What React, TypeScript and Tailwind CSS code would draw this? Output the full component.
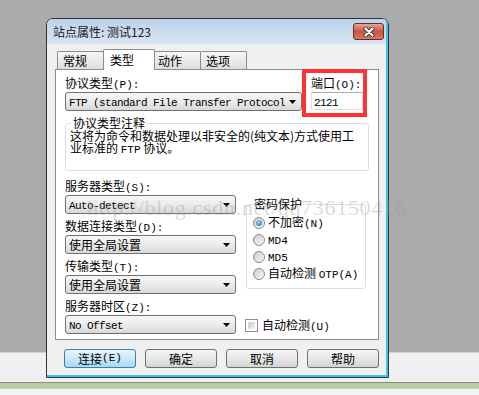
import React from "react";

function M({ children }: { children: React.ReactNode }) {
  return <span className="font-['Liberation_Mono',monospace] text-[11px]">{children}</span>;
}

function Arrow() {
  return (
    <svg width="7" height="4" viewBox="0 0 7 4" className="shrink-0">
      <polygon points="0,0 7,0 3.5,4" fill="#000" />
    </svg>
  );
}

function Select({ className, children }: { className: string; children: React.ReactNode }) {
  return (
    <div
      className={
        "h-[19px] flex items-center rounded-[3px] border border-[#707070] bg-gradient-to-b from-[#f6f6f6] via-[#ececec] to-[#d9d9d9] pl-[3px] pr-[5px] overflow-hidden " +
        className
      }
    >
      <span className="flex-1 overflow-hidden whitespace-nowrap leading-[17px]">{children}</span>
      <Arrow />
    </div>
  );
}

function MonoVal({ children }: { children: React.ReactNode }) {
  return <span className="font-['Liberation_Mono',monospace] text-[11px] tracking-[-0.6px]">{children}</span>;
}

function Label({ children }: { children: React.ReactNode }) {
  return <div className="h-[14px] leading-[14px] whitespace-nowrap">{children}</div>;
}

function Radio({ checked, children }: { checked?: boolean; children: React.ReactNode }) {
  return (
    <div className="h-[17px] flex items-center gap-[3px] whitespace-nowrap">
      <span className="w-[12px] h-[12px] shrink-0 rounded-full border border-[#8b8b8b] bg-gradient-to-br from-[#cdcdcd] to-[#f8f8f8] flex items-center justify-center">
        {checked && (
          <span className="w-[6px] h-[6px] rounded-full bg-[radial-gradient(circle_at_40%_35%,#9ad6ff,#1a5f9e)]" />
        )}
      </span>
      <span className="leading-[12px]">{children}</span>
    </div>
  );
}

function Button({ primary, children }: { primary?: boolean; children: React.ReactNode }) {
  return (
    <div
      className={
        primary
          ? "w-[72px] h-[19px] rounded-[3px] border border-[#3c7fb1] bg-gradient-to-b from-[#eaf6fd] via-[#c9e8f8] to-[#a7d9f5] flex items-center justify-center leading-[17px]"
          : "w-[72px] h-[19px] rounded-[3px] border border-[#707070] bg-gradient-to-b from-[#f4f4f4] via-[#e8e8e8] to-[#d3d3d3] flex items-center justify-center leading-[17px]"
      }
    >
      {children}
    </div>
  );
}

export default function App() {
  return (
    <div className="relative w-[479px] h-[395px] overflow-hidden flex flex-col font-['Noto_Sans_CJK_SC',sans-serif] text-[12px] text-black">
      <div className="h-[352px] bg-[#ababab]" />
      <div className="h-[30px] bg-[#f0f0f0] border-t border-[#d4d4d4]" />
      <div className="h-[1px] bg-[#8c8c8c]" />
      <div className="h-[5px] bg-[#b9cc9d]" />
      <div className="flex-1 bg-[#f3f3f3] border-t border-[#d0d0d0]" />

      {/* dialog window */}
      <div className="absolute left-[46px] top-[18px] w-[343px] h-[360px] border border-[#30343a] rounded-t-[7px] overflow-hidden bg-[#f0f0f0]">
        <div className="h-full flex flex-col border-r-2 border-b-2 border-[#3cc3ee]">
          {/* title bar */}
          <div className="h-[25px] shrink-0 flex items-center pl-[6px] pr-[2px] bg-gradient-to-b from-[#bcd1ea] to-[#d8e5f3]">
            <span className="leading-[14px] text-[#1a1a1a]">站点属性: 测试123</span>
            <div className="ml-auto w-[31px] h-[17px] rounded-[3px] border border-[#6b2a1f] bg-gradient-to-b from-[#e3a699] via-[#c9533f] to-[#d67a67] flex items-center justify-center">
              <svg width="12" height="10" viewBox="0 0 12 10">
                <path d="M2.5 1.5 L9.5 8.5 M9.5 1.5 L2.5 8.5" stroke="#3a3a3a" strokeWidth="4" strokeLinecap="round" />
                <path d="M2.5 1.5 L9.5 8.5 M9.5 1.5 L2.5 8.5" stroke="#ffffff" strokeWidth="2.2" strokeLinecap="round" />
              </svg>
            </div>
          </div>

          {/* client */}
          <div className="flex-1 flex flex-col pl-[8px] pr-[7px] pt-[5px]">
            {/* tabs */}
            <div className="h-[20px] flex items-end pl-[2px] relative z-10">
              <div className="w-[47px] h-[18px] border border-b-0 border-[#898c95] rounded-t-[2px] bg-gradient-to-b from-[#f6f6f6] to-[#dedede] pl-[5px] leading-[17px]">
                常规
              </div>
              <div className="w-[52px] h-[21px] -mb-px -ml-px border border-b-0 border-[#898c95] rounded-t-[2px] bg-white pl-[6px] leading-[19px]">
                类型
              </div>
              <div className="w-[47px] h-[18px] -ml-px border border-b-0 border-[#898c95] rounded-t-[2px] bg-gradient-to-b from-[#f6f6f6] to-[#dedede] pl-[3px] leading-[17px]">
                动作
              </div>
              <div className="w-[47px] h-[18px] -ml-px border border-b-0 border-[#898c95] rounded-t-[2px] bg-gradient-to-b from-[#f6f6f6] to-[#dedede] pl-[5px] leading-[17px]">
                选项
              </div>
            </div>

            {/* panel */}
            <div className="relative h-[271px] shrink-0 border border-[#898c95] bg-white pt-[6px] pl-[9px] pr-[9px]">
              {/* row 1 */}
              <div className="flex">
                <div className="w-[237px]">
                  <Label>
                    协议类型<M>(P):</M>
                  </Label>
                  <Select className="mt-[2px] w-[237px]">
                    <MonoVal>FTP (standard File Transfer Protocol</MonoVal>
                  </Select>
                </div>
                <div className="ml-[9px] w-[52px]">
                  <Label>
                    端口<M>(O):</M>
                  </Label>
                  <div className="mt-[2px] h-[18px] border border-[#dbdfe6] border-t-[#abadb3] bg-white pl-[2px] leading-[16px]">
                    <MonoVal>2121</MonoVal>
                  </div>
                </div>
              </div>

              {/* note group */}
              <fieldset className="mt-[6px] w-[304px] border border-[#d5dfe5] rounded-[3px] pl-[4px] pt-[1px] pb-[14px]">
                <legend className="ml-[1px] px-[2px] leading-[12px]">协议类型注释</legend>
                <div className="leading-[12px]">
                  这将为命令和数据处理以非安全的(纯文本)方式使用工
                </div>
                <div className="leading-[12px]">
                  业标准的 <M>FTP</M> 协议。
                </div>
              </fieldset>

              {/* lower */}
              <div className="mt-[8px] flex">
                <div className="w-[171px] flex flex-col">
                  <Label>
                    服务器类型<M>(S):</M>
                  </Label>
                  <Select className="mt-[2px] w-[171px]">
                    <MonoVal>Auto-detect</MonoVal>
                  </Select>
                  <div className="mt-[5px]">
                    <Label>
                      数据连接类型<M>(D):</M>
                    </Label>
                  </div>
                  <Select className="mt-[2px] w-[171px]">使用全局设置</Select>
                  <div className="mt-[5px]">
                    <Label>
                      传输类型<M>(T):</M>
                    </Label>
                  </div>
                  <Select className="mt-[2px] w-[171px]">使用全局设置</Select>
                  <div className="mt-[5px]">
                    <Label>
                      服务器时区<M>(Z):</M>
                    </Label>
                  </div>
                  <Select className="mt-[2px] w-[171px]">
                    <MonoVal>No Offset</MonoVal>
                  </Select>
                </div>

                <div className="ml-[10px] w-[120px] flex flex-col">
                  <fieldset className="mt-[19px] w-[120px] border border-[#d5dfe5] rounded-[3px] pl-[6px] pt-[4px] pb-[6px]">
                    <legend className="px-[1px] leading-[12px]">密码保护</legend>
                    <Radio checked>
                      不加密<M>(N)</M>
                    </Radio>
                    <Radio>
                      <M>MD4</M>
                    </Radio>
                    <Radio>
                      <M>MD5</M>
                    </Radio>
                    <Radio>
                      自动检测 <M>OTP(A)</M>
                    </Radio>
                  </fieldset>
                  <div className="mt-[27px] -ml-px h-[19px] flex items-center gap-[4px] whitespace-nowrap">
                    <span className="w-[13px] h-[13px] shrink-0 border border-[#8f8f8f] bg-white p-[2px]">
                      <span className="block w-full h-full bg-gradient-to-br from-[#cbcbcb] to-[#f4f4f4]" />
                    </span>
                    <span className="leading-[12px]">
                      自动检测<M>(U)</M>
                    </span>
                  </div>
                </div>
              </div>

              {/* red annotation box */}
              <div className="absolute left-[246px] top-[-1px] w-[65px] h-[48px] border-4 border-[#ff3333] pointer-events-none" />
            </div>

            {/* buttons */}
            <div className="mt-[9px] pl-[9px] flex gap-[9px]">
              <Button primary>
                连接<M>(E)</M>
              </Button>
              <Button>确定</Button>
              <Button>取消</Button>
              <Button>帮助</Button>
            </div>
          </div>
        </div>
      </div>

      {/* watermark */}
      <div className="absolute left-[87px] top-[197px] pointer-events-none whitespace-nowrap font-['Liberation_Serif',serif] text-[22px] leading-[22px] tracking-[0.7px] text-[rgba(150,150,150,0.35)]">
        http://blog.csdn.net/qq736150416
      </div>
    </div>
  );
}
